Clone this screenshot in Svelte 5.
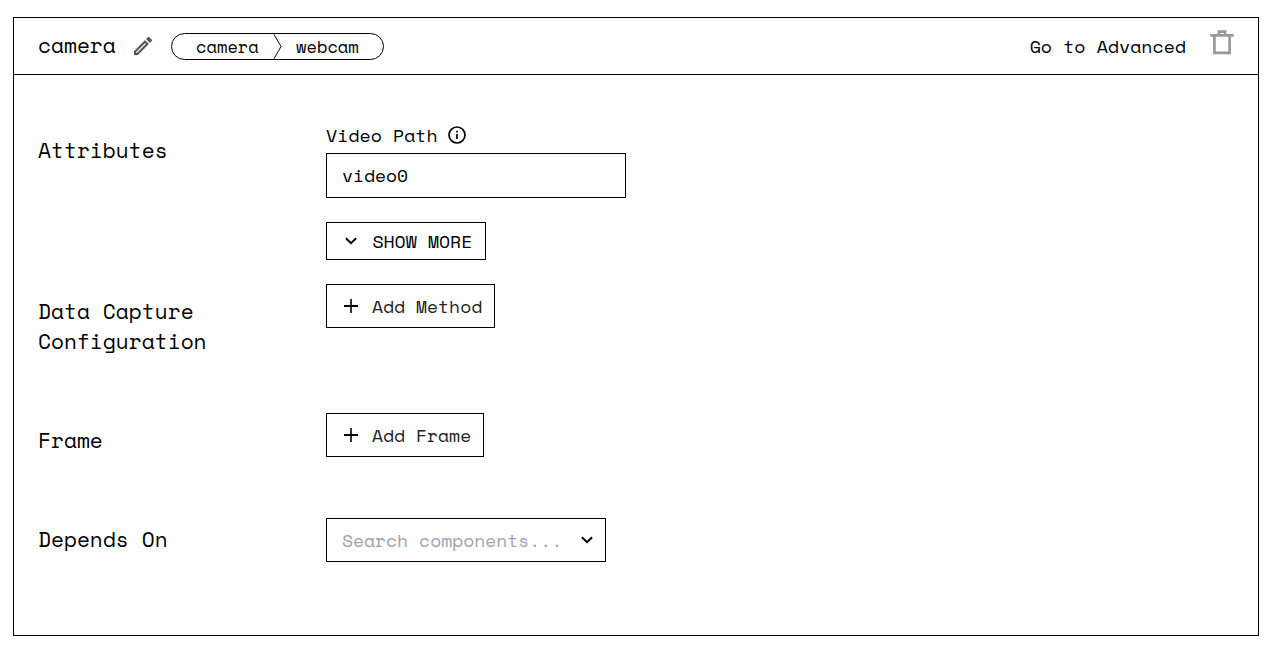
<script>
  let name = $state('camera');
  let videoPath = $state('video0');
</script>

<section class="card">
  <header>
    <h2>{name}</h2>
    <svg class="pencil" viewBox="0 0 24 24" width="24" height="24"><path fill="#555" stroke="#555" stroke-width=".2" d="M14.06 9.02l.92.92L5.92 19H5v-.92l9.06-9.06M17.66 3c-.25 0-.51.1-.7.29l-1.83 1.83 3.75 3.75 1.83-1.83c.39-.39.39-1.02 0-1.41l-2.34-2.34c-.2-.2-.45-.29-.71-.29zm-3.6 3.19L3 17.25V21h3.75L17.81 9.94l-3.75-3.75z" /></svg>
    <div class="chip">
      <span>camera</span>
      <svg viewBox="0 0 9 26" width="9" height="26"><path d="M.8 .3L8.2 13L.8 25.7" fill="none" stroke="#000" /></svg>
      <span>webcam</span>
    </div>
    <span class="advanced">Go to Advanced</span>
    <svg class="trash" viewBox="0 0 24 25" width="24" height="25"><path d="M.3 5.4H23.7M8.9 5V1.6H15.1V5M4.4 6V22.9H19.6V6" fill="none" stroke="#999" stroke-width="2.7" /></svg>
  </header>

  <div class="body">
    <div class="row attributes">
      <h3>Attributes</h3>
      <div class="fields">
        <div class="label">
          <span>Video Path</span>
          <svg viewBox="0 0 18 18" width="18" height="18"><circle cx="9" cy="9" r="8" fill="none" stroke="#000" stroke-width="1.7" /><path d="M8.15 8h1.7v5h-1.7zM8.15 4.7h1.7v1.7h-1.7z" /></svg>
        </div>
        <input bind:value={videoPath} aria-label="Video Path" />
        <button class="more">
          <svg viewBox="0 0 12 8" width="12" height="8"><path d="M.9 1.2L6 6.2L11.1 1.2" fill="none" stroke="#000" stroke-width="2" /></svg>
          <span>SHOW MORE</span>
        </button>
      </div>
    </div>

    <div class="row capture">
      <h3>Data Capture Configuration</h3>
      <button class="add method">
        <svg viewBox="0 0 14 14" width="14" height="14"><path d="M7 0V14" stroke="#000" stroke-width="1.6" /><path d="M0 7H14" stroke="#000" stroke-width="2" /></svg>
        <span>Add Method</span>
      </button>
    </div>

    <div class="row frame">
      <h3>Frame</h3>
      <button class="add">
        <svg viewBox="0 0 14 14" width="14" height="14"><path d="M7 0V14" stroke="#000" stroke-width="1.6" /><path d="M0 7H14" stroke="#000" stroke-width="2" /></svg>
        <span>Add Frame</span>
      </button>
    </div>

    <div class="row depends">
      <h3>Depends On</h3>
      <div class="select">
        <span>Search components...</span>
        <svg viewBox="0 0 12 8" width="12" height="8"><path d="M.9 1.2L6 6.2L11.1 1.2" fill="none" stroke="#000" stroke-width="2" /></svg>
      </div>
    </div>
  </div>
</section>

<style>
  :global(body) { background: #fff; }
  .card, .card * { box-sizing: border-box; }
  .card {
    margin: 17px 14px 0 13px;
    height: 619px;
    border: 1px solid #000;
    color: #000;
    font: 18px/24px "Space Mono", "Liberation Mono", monospace;
  }
  svg { display: block; flex: none; }
  h2, h3 { margin: 0; font-weight: 400; font-size: 21.2px; line-height: 30px; }
  header { display: flex; height: 57px; padding: 0 24px; border-bottom: 1px solid #000; align-items: center; }
  h2 { width: 79px; margin-top: -2px; }
  .pencil { margin-left: 14px; width: 24px; }
  .chip {
    display: flex; align-items: center; width: 213px; height: 27px; margin: 1px 0 0 16px;
    padding-left: 24px; border: 1px solid #000; border-radius: 14px; font-size: 17.1px;
  }
  .chip span { width: 63px; margin-top: 1px; }
  .chip svg { height: 25px; margin: 0 14px; }
  .advanced { margin: 2px 24px 0 auto; font-size: 18.25px; }
  .trash { margin-top: -7px; }
  .body { padding: 48px 24px 0; }
  .row { display: grid; grid-template-columns: 288px 1fr; align-items: start; }
  .attributes { height: 161px; }
  .attributes h3 { padding-top: 12px; }
  .label { display: flex; align-items: center; gap: 10.5px; height: 30px; line-height: 24px; padding-bottom: 5px; font-size: 18.25px; }
  .label svg { margin-top: -1px; }
  input {
    display: block; width: 300px; height: 45px; padding: 0 15px 2px; border: 1px solid #000; border-radius: 0;
    outline: 0; background: #fff; color: #000; font: inherit;
  }
  button {
    display: flex; align-items: center; border: 1px solid #000; background: #fff; color: #000;
    padding: 0; font: inherit;
  }
  .more { width: 160px; height: 38px; margin-top: 24px; padding-left: 18px; gap: 15.4px; }
  .more span { margin-top: 2px; font-size: 18.15px; }
  .add { width: 158px; height: 44px; padding-left: 17px; gap: 14px; color: #222; }
  .method { width: 169px; }
  .capture { height: 129px; }
  .capture h3 { width: 200px; padding-top: 12px; }
  .frame { height: 105px; }
  .frame h3 { padding-top: 12px; }
  .depends h3 { padding-top: 6px; }
  .select {
    display: flex; align-items: center; justify-content: space-between; width: 280px; height: 44px;
    padding: 0 12px 0 15px; border: 1px solid #000; color: #9ca3af;
  }
</style>
